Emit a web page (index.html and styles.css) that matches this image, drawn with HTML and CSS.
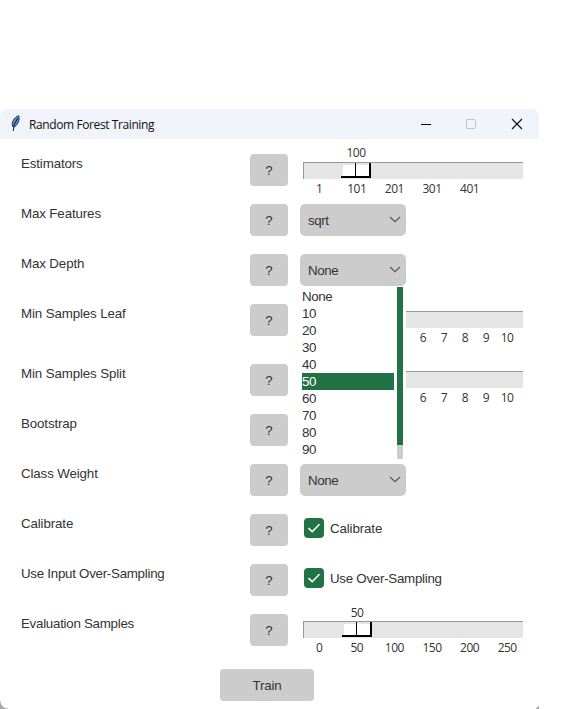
FILE: index.html
```html
<!DOCTYPE html>
<html lang="en">
<head>
<meta charset="utf-8">
<title>Random Forest Training</title>
<link rel="stylesheet" href="styles.css">
</head>
<body>
<main class="window">
  <header class="titlebar">
    <svg class="feather" width="12" height="18" viewBox="0 0 12 18"><path d="M2.6 12.5C1.2 8.5 4 3.5 8.5 1.7C10.4 5 8 11 4 13Z" fill="#4f8fd6" stroke="#263345" stroke-width="1"/><path d="M3.2 17L4.2 11L7.6 4.2" fill="none" stroke="#151b26" stroke-width="1"/></svg>
    <h1 class="title">Random Forest Training</h1>
    <svg class="controls" width="104" height="12" viewBox="0 0 104 12" fill="none"><path d="M0 6.5H10" stroke="#000"/><rect x="45.5" y="1.5" width="9" height="9" rx="1" stroke="#c0c1c6"/><path d="M91 1L101 11M101 1L91 11" stroke="#111" stroke-width="1.15"/></svg>
  </header>
  <div class="form">
    <div class="row">
      <span class="label">Estimators</span><button class="help">?</button>
      <div class="scale estimators"><span class="value">100</span><div class="trough"><i class="thumb"></i></div><div class="ticks"><span>1</span><span>101</span><span>201</span><span>301</span><span>401</span></div></div>
    </div>
    <div class="row">
      <span class="label">Max Features</span><button class="help">?</button>
      <div class="select">sqrt<svg class="chevron" width="12" height="7" viewBox="0 0 12 7"><path d="M1 1L6 5.7L11 1"/></svg></div>
    </div>
    <div class="row">
      <span class="label">Max Depth</span><button class="help">?</button>
      <div class="select">None<svg class="chevron" width="12" height="7" viewBox="0 0 12 7"><path d="M1 1L6 5.7L11 1"/></svg>
        <div class="popup">
          <ul class="options"><li>None</li><li>10</li><li>20</li><li>30</li><li>40</li><li class="selected">50</li><li>60</li><li>70</li><li>80</li><li>90</li></ul>
          <div class="scrollbar"><i class="scrollthumb"></i></div>
        </div>
      </div>
    </div>
    <div class="row tall">
      <span class="label">Min Samples Leaf</span><button class="help">?</button>
      <div class="scale samples"><span class="value"></span><div class="trough"></div><div class="ticks"><span>6</span><span>7</span><span>8</span><span>9</span><span>10</span></div></div>
    </div>
    <div class="row">
      <span class="label">Min Samples Split</span><button class="help">?</button>
      <div class="scale samples"><span class="value"></span><div class="trough"></div><div class="ticks"><span>6</span><span>7</span><span>8</span><span>9</span><span>10</span></div></div>
    </div>
    <div class="row">
      <span class="label">Bootstrap</span><button class="help">?</button>
    </div>
    <div class="row">
      <span class="label">Class Weight</span><button class="help">?</button>
      <div class="select">None<svg class="chevron" width="12" height="7" viewBox="0 0 12 7"><path d="M1 1L6 5.7L11 1"/></svg></div>
    </div>
    <div class="row">
      <span class="label">Calibrate</span><button class="help">?</button>
      <div class="check"><span class="box"><svg width="20" height="20" viewBox="0 0 20 20"><path d="M4.5 10.2L8.2 13.7L15.5 6.2"/></svg></span>Calibrate</div>
    </div>
    <div class="row">
      <span class="label long">Use Input Over-Sampling</span><button class="help">?</button>
      <div class="check long"><span class="box"><svg width="20" height="20" viewBox="0 0 20 20"><path d="M4.5 10.2L8.2 13.7L15.5 6.2"/></svg></span>Use Over-Sampling</div>
    </div>
    <div class="row">
      <span class="label long">Evaluation Samples</span><button class="help">?</button>
      <div class="scale evaluation"><span class="value">50</span><div class="trough"><i class="thumb"></i></div><div class="ticks"><span>0</span><span>50</span><span>100</span><span>150</span><span>200</span><span>250</span></div></div>
    </div>
  </div>
  <footer class="actions"><button class="train">Train</button></footer>
</main>
</body>
</html>
```
FILE: styles.css
```css
* { box-sizing: border-box; }
body {
  margin: 0;
  height: 709px;
  overflow: hidden;
  padding-top: 109px;
  background: #fff;
  color: #333;
  font: 13.33px/17px "Liberation Sans", Arial, sans-serif;
  letter-spacing: -0.13px;
}
.window {
  width: 539px;
  height: 600px;
  background:
    radial-gradient(circle at 8px 0, transparent 7px, #aaa 8px) left bottom / 8px 8px no-repeat,
    linear-gradient(135deg, transparent 60%, #aaa 65%) right bottom / 6px 3px no-repeat,
    #fff;
}
.titlebar {
  display: flex;
  align-items: center;
  height: 30px;
  padding: 0 14px 0 10px;
  border-radius: 7px 7px 0 0;
  background: #f0f3f9;
}
.feather { margin-top: -2px; }
.title {
  margin: 0 auto 0 7px;
  font: 400 12px/17px "Open Sans", "Noto Sans", sans-serif;
  letter-spacing: -0.4px;
  color: #111;
}
.controls { margin-top: -1px; }
.form { padding: 6px 0 0 21px; }
.row {
  display: grid;
  grid-template-columns: 229px 50px 220px;
  align-items: start;
  height: 50px;
}
.tall { height: 60px; }
.label { padding-top: 10px; }
.long { letter-spacing: -0.27px; }
button {
  border: 0;
  padding: 0;
  border-radius: 4px;
  background: #ccc;
  color: #333;
  font: inherit;
  letter-spacing: inherit;
  height: 32px;
}
.help { width: 38px; margin-top: 9px; }
.select {
  position: relative;
  display: flex;
  align-items: center;
  justify-content: space-between;
  width: 106px;
  height: 32px;
  margin-top: 9px;
  padding: 0 5px 0 8px;
  border-radius: 5px;
  background: #ccc;
  letter-spacing: -0.4px;
}
.chevron { margin-top: -2px; }
.chevron path { fill: none; stroke: #555; stroke-width: 1.1; }
.popup {
  position: absolute;
  z-index: 2;
  top: 33px;
  left: 0;
  display: flex;
  width: 106px;
  height: 173px;
  padding: 0 3px 0 2px;
  background: #fff;
}
.options {
  width: 92px;
  margin: 0 3px 0 0;
  padding: 1px 0 0;
  list-style: none;
}
.options li { height: 17px; line-height: 18px; }
.options .selected { background: #217346; color: #fff; }
.scrollbar { width: 6px; height: 172px; background: #ccc; }
.scrollthumb { display: block; height: 158px; background: #217346; }
.scale {
  width: 220px;
  margin-left: 3px;
  font: 12px/16px "Open Sans", "Noto Sans", sans-serif;
  letter-spacing: -0.5px;
}
.value {
  display: block;
  width: 106px;
  height: 17px;
  text-align: center;
}
.trough {
  height: 17px;
  border-top: 1px solid #999;
  border-left: 1px solid #999;
  background: #e5e5e5;
}
.evaluation .value { height: 16px; width: 108px; }
.samples .value { height: 16px; }
.thumb {
  display: block;
  width: 30px;
  height: 15px;
  margin-left: 37px;
  border: solid #000;
  border-width: 0 2px 2px 0;
  background:
    linear-gradient(#000, #000) 14px 0 / 1px 100% no-repeat,
    linear-gradient(#fff, #fff) 2px 2px no-repeat,
    #e5e5e5;
}
.evaluation .thumb { margin-left: 38px; }
.ticks { display: flex; margin: 2px 0 0 -2.6px; }
.ticks span { flex: 0 0 37.6px; text-align: center; }
.samples .ticks { margin-left: 109.5px; }
.samples .ticks span { flex-basis: 21px; }
.check {
  display: flex;
  align-items: center;
  gap: 6px;
  height: 20px;
  margin: 13px 0 0 4px;
}
.box { width: 20px; height: 20px; border-radius: 4px; background: #217346; }
.box svg { display: block; }
.box path { fill: none; stroke: #fff; stroke-width: 1.6; }
.actions { padding: 14px 0 0 220px; }
.train { width: 94px; }
```
